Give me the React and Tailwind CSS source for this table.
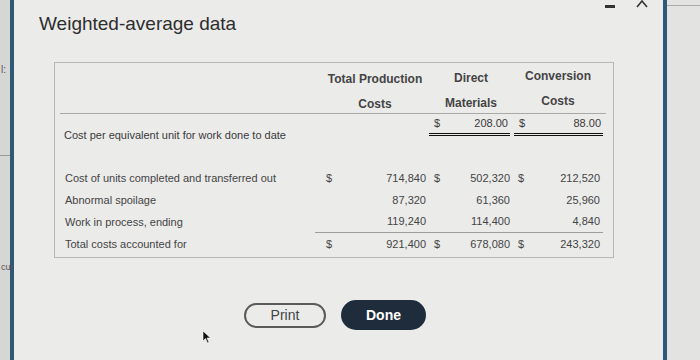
import React from 'react';

const rows = [
  { label: 'Cost of units completed and transferred out', a: '714,840', b: '502,320', c: '212,520', dollar: true },
  { label: 'Abnormal spoilage', a: '87,320', b: '61,360', c: '25,960' },
  { label: 'Work in process, ending', a: '119,240', b: '114,400', c: '4,840' },
];

const Cell = ({ dollar, value, className = '' }) => (
  <div className={`flex justify-between items-center ${className}`}>
    <span className="pl-[5px]">{dollar ? '$' : ''}</span>
    <span>{value}</span>
  </div>
);

const App = () => {
  return (
    <div
      className="w-[700px] h-[360px] flex overflow-hidden bg-[#e9e9e8] text-[#3a3a3a]"
      style={{ fontFamily: '"Liberation Sans", Arial, sans-serif' }}
    >
      {/* left edge of the window behind */}
      <div className="w-[14px] shrink-0 bg-[#d6d6d4] border-r-[4px] border-[#2f5877] flex flex-col text-[10px] text-[#555]">
        <div className="h-[64px]" />
        <div className="leading-[12px] pl-[1px]">l:</div>
        <div className="h-[80px] border-b border-[#999]" />
        <div className="h-[105px]" />
        <div className="text-[9px] pl-[1px]">curr</div>
      </div>

      {/* modal */}
      <div className="flex-1 flex flex-col bg-[#ebebea]">
        <h1 className="pl-[25px] pt-[12px] text-[19px] leading-[24px] text-[#2e2e2e]">Weighted-average data</h1>

        <div className="ml-[40px] mt-[26px] w-[560px] h-[196px] border border-[#b8b8b8] flex flex-col text-[11px]">
          {/* header */}
          <div className="ml-[5px] mr-[7px] flex border-b border-[#a9a9a9] font-bold text-[#444] text-[12px] h-[51px]">
            <div className="w-[261px]" />
            <div className="w-[108px] flex flex-col items-center justify-between pt-[9px] pb-[2px] leading-[14px]">
              <span>Total Production</span>
              <span>Costs</span>
            </div>
            <div className="w-[84px] flex flex-col items-center justify-between pt-[8px] pb-[3px] leading-[14px]">
              <span>Direct</span>
              <span>Materials</span>
            </div>
            <div className="w-[90px] flex flex-col items-center justify-between pt-[6px] pb-[5px] leading-[14px]">
              <span>Conversion</span>
              <span>Costs</span>
            </div>
          </div>

          {/* cost per equivalent unit */}
          <div className="ml-[5px] mr-[7px] flex items-start h-[24px]">
            <div className="w-[369px] pl-[4px] pt-[14px] leading-[14px]">Cost per equivalent unit for work done to date</div>
            <Cell dollar value="208.00" className="w-[81px] h-[22px] pt-[1px] !items-start border-b-[3px] border-double border-[#111] pr-[2px]" />
            <div className="w-[4px]" />
            <Cell dollar value="88.00" className="w-[89px] h-[22px] pt-[1px] !items-start border-b-[3px] border-double border-[#111] pr-[2px] mr-[-4px]" />
          </div>

          {/* data rows */}
          <div className="ml-[5px] mr-[7px] mt-[29px] flex flex-col text-[#444]">
            {rows.map((r, i) => {
              const line = i === 2 ? 'border-b border-[#9d9d9d]' : '';
              return (
                <div key={r.label} className="flex h-[22px]">
                  <div className="w-[255px] pl-[5px] flex items-center">{r.label}</div>
                  <div className={`w-[6px] ${line}`} />
                  <Cell dollar={r.dollar} value={r.a} className={`w-[108px] pr-[3px] ${line}`} />
                  <Cell dollar={r.dollar} value={r.b} className={`w-[84px] pr-[3px] ${line}`} />
                  <Cell dollar={r.dollar} value={r.c} className={`w-[90px] pr-[3px] ${line}`} />
                </div>
              );
            })}
            <div className="flex items-center h-[22px]">
              <div className="w-[261px] pl-[5px]">Total costs accounted for</div>
              <Cell dollar value="921,400" className="w-[108px] pr-[3px]" />
              <Cell dollar value="678,080" className="w-[84px] pr-[3px]" />
              <Cell dollar value="243,320" className="w-[90px] pr-[3px]" />
            </div>
          </div>
        </div>

        {/* buttons */}
        <div className="mt-[42px] pl-[230px] flex items-center gap-[15px] relative">
          <button className="w-[82px] h-[25px] rounded-full border-2 border-[#5a5a5a] text-[14px] text-[#444]">Print</button>
          <button className="w-[85px] h-[30px] rounded-full bg-[#1f2c3b] text-[14px] font-bold text-white">Done</button>
          <svg className="absolute left-[188px] top-[30px]" width="10" height="14" viewBox="0 0 10 14">
            <path d="M1 1 L1 11 L3.5 8.5 L5.5 13 L7 12.3 L5 8 L8.5 8 Z" fill="#111" stroke="#fff" strokeWidth="0.6" />
          </svg>
        </div>
      </div>

      {/* right edge */}
      <div className="w-[37px] shrink-0 flex relative">
        <div className="w-[4px] bg-[#2f5877]" />
        <div className="flex-1 bg-[#e3e3e1] pt-[5px]">
          <div className="border-t border-[#aaa]" />
        </div>
        <div className="absolute left-[-58px] top-[5px] w-[10px] h-[3px] bg-[#333]" />
        <svg className="absolute left-[-28px] top-[-2px]" width="14" height="10" viewBox="0 0 14 10">
          <path d="M2 9 L7 3 L12 9" fill="none" stroke="#333" strokeWidth="1.6" />
        </svg>
      </div>
    </div>
  );
};

export default App;
